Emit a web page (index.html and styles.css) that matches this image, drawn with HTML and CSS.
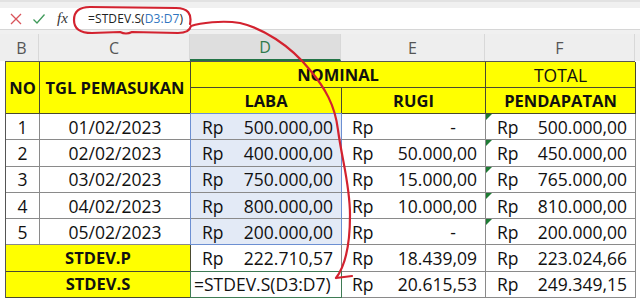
FILE: index.html
```html
<!DOCTYPE html>
<html>
<head>
<meta charset="utf-8">
<link rel="stylesheet" href="styles.css">
</head>
<body>
<div class="app">
  <div class="topband"></div>
  <div class="fbar">
    <div class="fbtns">
      <svg class="ic" width="14" height="14" viewBox="0 0 14 14"><path d="M2 2 L12 12 M12 2 L2 12" stroke="#d9535a" stroke-width="1.3" fill="none"/></svg>
      <svg class="ic" width="14" height="14" viewBox="0 0 14 14"><path d="M1.5 7.5 L5 11 L12.5 2.5" stroke="#3f9a5a" stroke-width="1.3" fill="none"/></svg>
      <span class="fx">fx</span>
    </div>
    <div class="formula">=STDEV.S(<span class="ref">D3:D7</span>)</div>
  </div>
  <div class="gap"></div>
  <div class="colheads">
    <div class="ch edge"></div>
    <div class="ch">B</div>
    <div class="ch">C</div>
    <div class="ch sel">D</div>
    <div class="ch">E</div>
    <div class="ch">F</div>
    <div class="ch edge"></div>
  </div>
  <div class="grid">
    <div class="c y b bold rs2 cB">NO</div>
    <div class="c y b bold rs2 cC">TGL PEMASUKAN</div>
    <div class="c y b bold cDE">NOMINAL</div>
    <div class="c y b cF">TOTAL</div>
    <div class="c y b bold cD">LABA</div>
    <div class="c y b bold cE">RUGI</div>
    <div class="c y b bold cF">PENDAPATAN</div>

    <div class="c cB">1</div>
    <div class="c cC">01/02/2023</div>
    <div class="c a hl first cD"><span>Rp</span><span>500.000,00</span></div>
    <div class="c a cE"><span>Rp</span><span class="dash">-</span></div>
    <div class="c a cF tri"><span>Rp</span><span>500.000,00</span></div>

    <div class="c cB">2</div>
    <div class="c cC">02/02/2023</div>
    <div class="c a hl cD"><span>Rp</span><span>400.000,00</span></div>
    <div class="c a cE"><span>Rp</span><span>50.000,00</span></div>
    <div class="c a cF tri"><span>Rp</span><span>450.000,00</span></div>

    <div class="c cB">3</div>
    <div class="c cC">03/02/2023</div>
    <div class="c a hl cD"><span>Rp</span><span>750.000,00</span></div>
    <div class="c a cE"><span>Rp</span><span>15.000,00</span></div>
    <div class="c a cF tri"><span>Rp</span><span>765.000,00</span></div>

    <div class="c cB">4</div>
    <div class="c cC">04/02/2023</div>
    <div class="c a hl cD"><span>Rp</span><span>800.000,00</span></div>
    <div class="c a cE"><span>Rp</span><span>10.000,00</span></div>
    <div class="c a cF tri"><span>Rp</span><span>810.000,00</span></div>

    <div class="c cB">5</div>
    <div class="c cC">05/02/2023</div>
    <div class="c a hl last cD"><span>Rp</span><span>200.000,00</span></div>
    <div class="c a cE"><span>Rp</span><span class="dash">-</span></div>
    <div class="c a cF tri"><span>Rp</span><span>200.000,00</span></div>

    <div class="c y b bold cBC">STDEV.P</div>
    <div class="c a cD"><span>Rp</span><span>222.710,57</span></div>
    <div class="c a cE"><span>Rp</span><span>18.439,09</span></div>
    <div class="c a cF"><span>Rp</span><span>223.024,66</span></div>

    <div class="c y b bold cBC">STDEV.S</div>
    <div class="c edit cD">=STDEV.S(D3:D7)</div>
    <div class="c a cE"><span>Rp</span><span>20.615,53</span></div>
    <div class="c a cF"><span>Rp</span><span>249.349,15</span></div>
  </div>
  <svg class="ink" width="640" height="303" viewBox="0 0 640 303">
    <path d="M190 24 C192 14, 188 8, 176 8 L90 7 C78 7, 74 13, 74 20 C74 29, 80 33, 92 33 L120 32 C124 34, 128 34, 132 32 L178 33 C186 33, 190 30, 191 26 C200 23, 222 20, 240 23 C262 28, 290 45, 310 70 C325 88, 335 105, 338 130 C342 160, 350 185, 350 215 C350 245, 346 265, 336 278 M336 278 L352 276" stroke="#d3222f" stroke-width="2.2" fill="none" stroke-linecap="round" stroke-linejoin="round"/>
  </svg>
</div>
</body>
</html>
```

FILE: styles.css
```css
* { box-sizing: border-box; }
html, body { margin: 0; padding: 0; background: #ffffff; }
body { font-family: "Open Sans", "Liberation Sans", sans-serif; color: #111; }

.app { position: relative; width: 640px; height: 303px; overflow: hidden; background: #fff; }

.topband { height: 8px; background: #f0f0f0; border-top: 2px solid #e2e2e2; }

.fbar { height: 22px; background: #fff; border-bottom: 1px solid #d6d6d6; display: flex; align-items: center; }
.fbtns { width: 76px; display: flex; align-items: center; gap: 9px; padding-left: 9px; height: 100%; }
.ic { display: block; }
.fx { font-family: "Liberation Serif", serif; font-style: italic; font-size: 15px; color: #333; margin-left: 2px; }
.formula { padding-left: 12px; font-size: 12px; color: #222; letter-spacing: 0.1px; }
.ref { color: #2f75c0; }

.gap { height: 4px; background: #f0f0f0; }

.colheads { display: grid; grid-template-columns: 5px 34px 151px 151px 144px 150px 5px; height: 27px; background: #eeeeee; }
.ch { display: flex; align-items: center; justify-content: center; font-size: 16px; color: #555; border-right: 1px solid #d8d8d8; padding-top: 1px; }
.ch.edge { border-right: none; }
.ch.sel { background: #dedede; color: #2f7a4c; border-bottom: 2px solid #217346; }

.grid { display: grid; grid-template-columns: 34px 151px 151px 144px 150px; grid-template-rows: 26px 26px repeat(7, 26.3px); margin-left: 5px; border-top: 1px solid #555; border-left: 1px solid #555; width: 630px; }

.c { border-right: 1px solid #8a8a8a; border-bottom: 1px solid #8a8a8a; font-size: 17.5px; line-height: 20px; display: flex; align-items: center; justify-content: center; white-space: nowrap; position: relative; }
.c.y { background: #ffff00; }
.c.b { border-color: #4a4a30; }
.bold { font-weight: 700; font-size: 16.5px; }

.rs2 { grid-row: span 2; }
.cB { grid-column: 1; }
.cC { grid-column: 2; }
.cD { grid-column: 3; }
.cE { grid-column: 4; }
.cF { grid-column: 5; }
.cDE { grid-column: 3 / 5; }
.cBC { grid-column: 1 / 3; }

.c.a { justify-content: space-between; padding: 0 8px 0 11px; }
.c.cE.a { padding-left: 10px; }
.dash { padding-right: 21px; }

.c.hl { background: #e3eaf6; border-right-color: #6c8fd2; box-shadow: -1px 0 0 #6c8fd2; }
.c.hl.first { box-shadow: -1px 0 0 #6c8fd2, 0 -1px 0 #6c8fd2, -1px -1px 0 #6c8fd2; }
.c.hl.last { border-bottom-color: #6c8fd2; }

.tri::before { content: ""; position: absolute; left: 0; top: 0; width: 0; height: 0; border-top: 6px solid #1e7b34; border-right: 6px solid transparent; }

.c.edit { justify-content: flex-start; padding-left: 3px; overflow: visible; border-right-color: #3f7b55; border-bottom-color: #3f7b55; box-shadow: -1px 0 0 #3f7b55, 0 -1px 0 #3f7b55, -1px -1px 0 #3f7b55; }

.ink { position: absolute; left: 0; top: 0; pointer-events: none; }
```
